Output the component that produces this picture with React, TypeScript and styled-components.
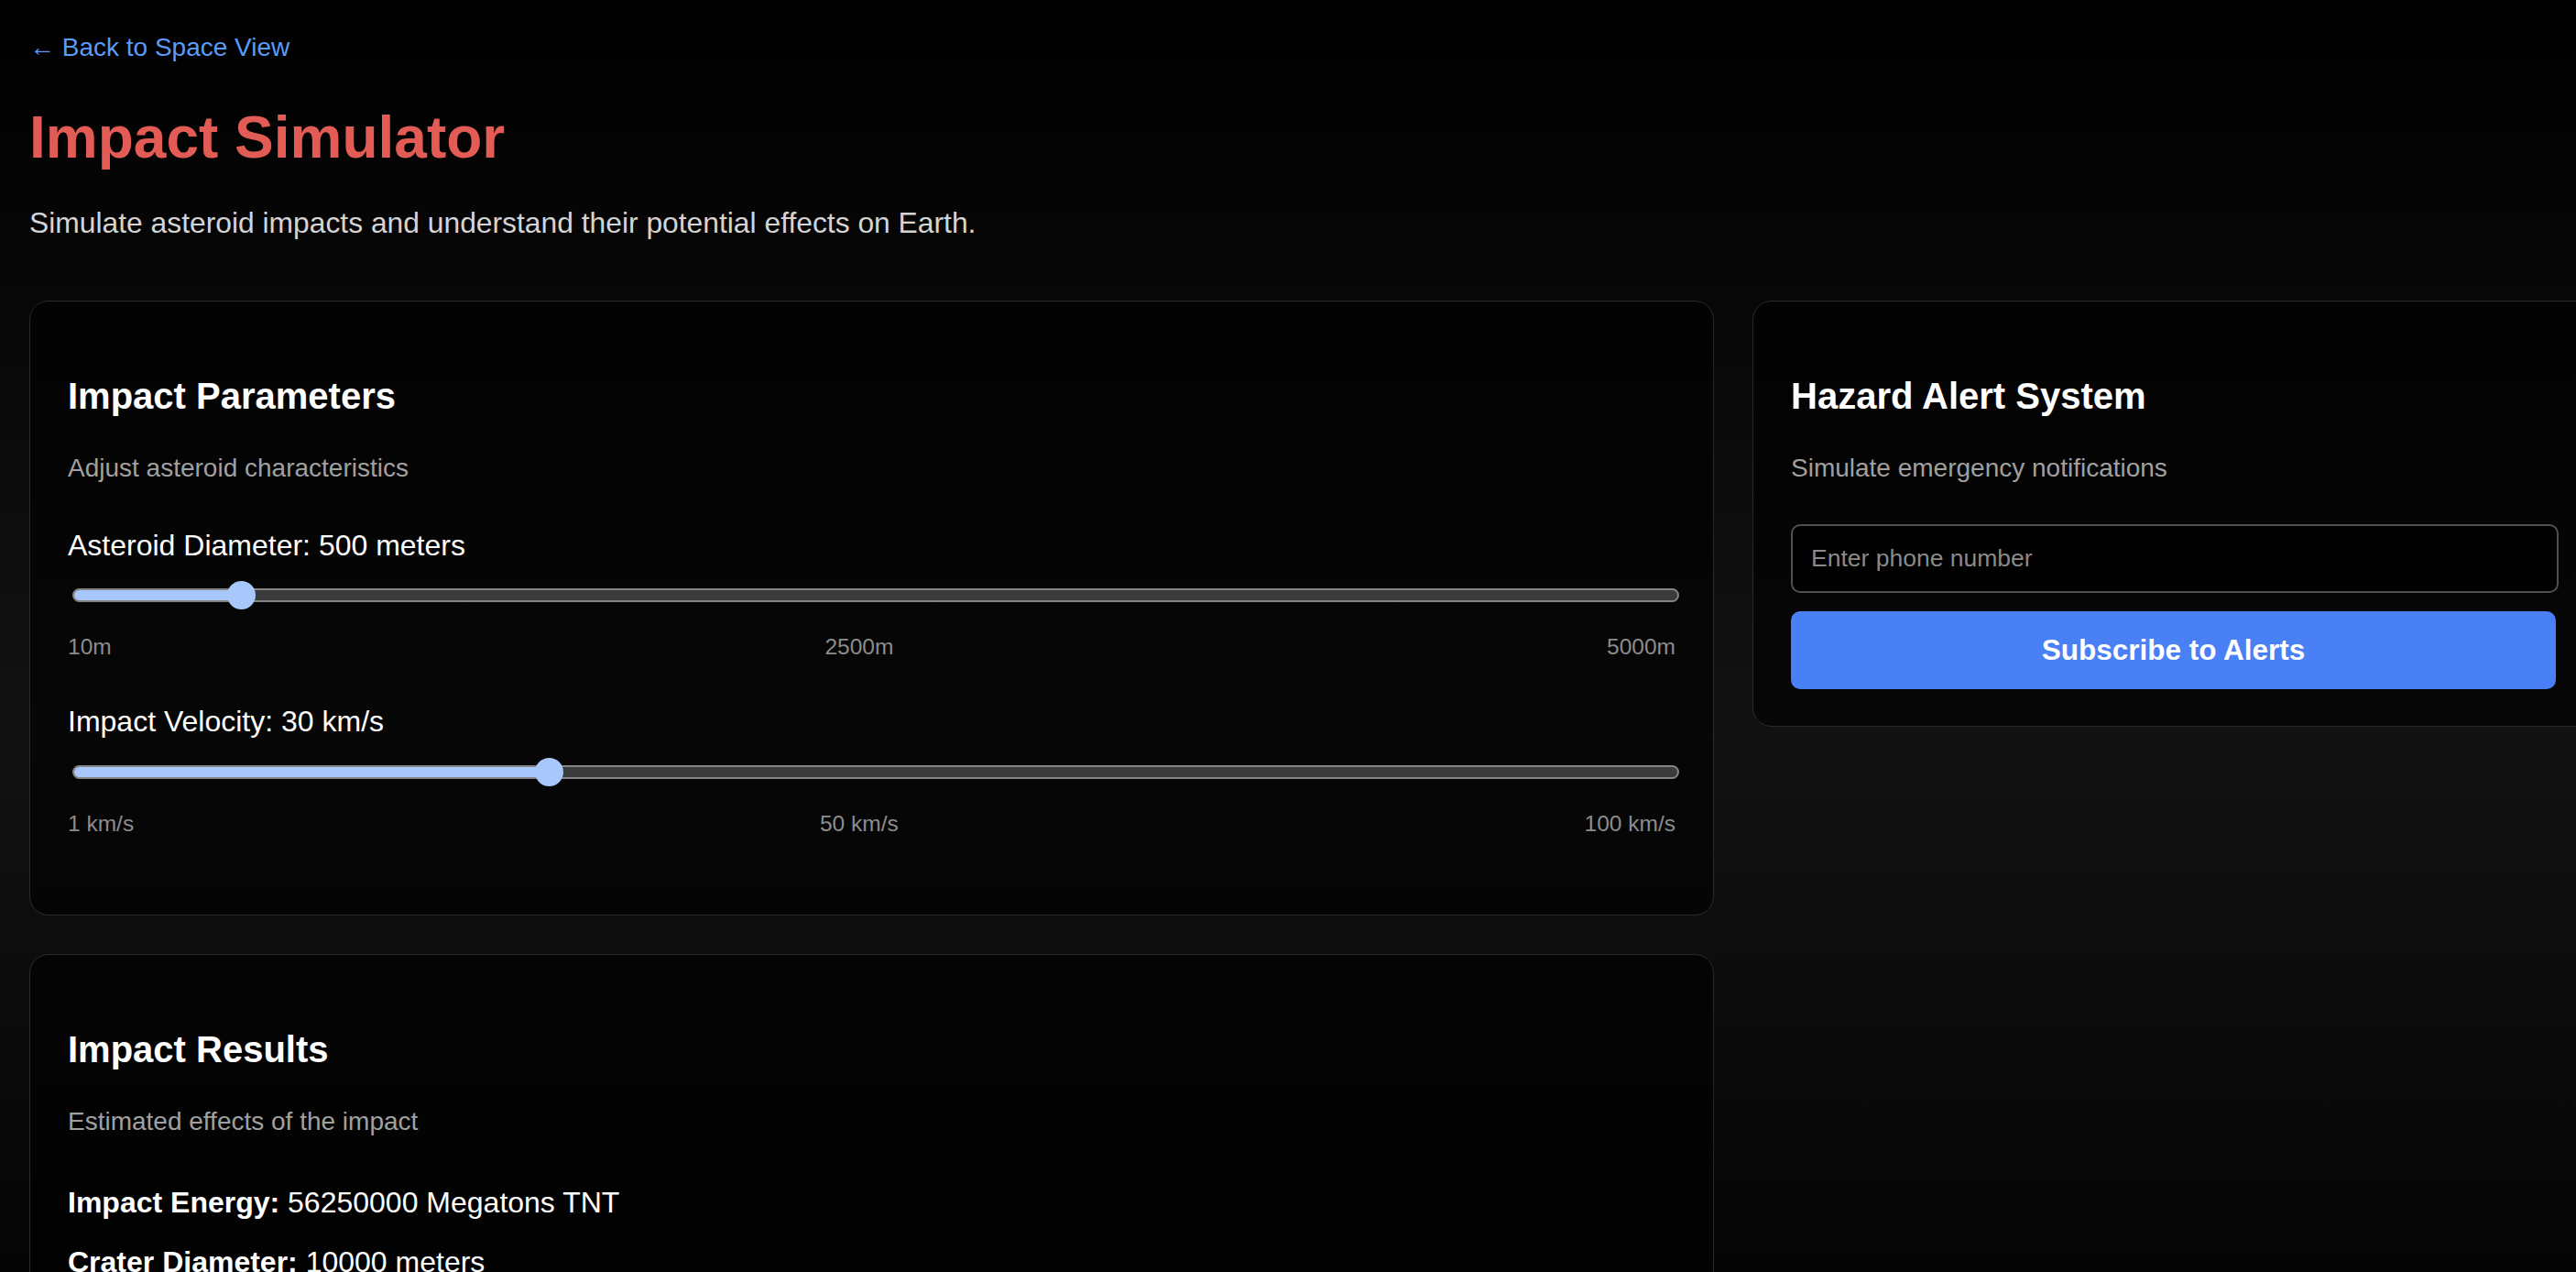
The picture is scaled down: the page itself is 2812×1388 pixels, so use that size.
import React from 'react'
import styled, { createGlobalStyle } from 'styled-components'

const GlobalStyle = createGlobalStyle`
  html, body {
    margin: 0;
    padding: 0;
    overflow: hidden;
    background: #000;
  }
  body {
    font-family: "Liberation Sans", Arial, sans-serif;
  }
  * {
    box-sizing: border-box;
  }
`

type SliderProps = {
    label: string
    value: number
    min: number
    max: number
    ticks: [string, string, string]
}

const Slider: React.FunctionComponent<SliderProps> = ({ label, value, min, max, ticks }) => {
    const f = (value - min) / (max - min)
    return (
        <ControlGroup>
            <ControlLabel>{label}</ControlLabel>
            <SliderBox>
                <Track>
                    <Fill style={{ width: `calc(${f} * (100% - 27px) + 13.5px)` }} />
                </Track>
                <Thumb style={{ left: `calc(${f} * (100% - 31px))` }} />
            </SliderBox>
            <RangeLabels>
                {ticks.map(t => <span key={t}>{t}</span>)}
            </RangeLabels>
        </ControlGroup>
    )
}

export default function App() {
    return (
        <Page>
            <GlobalStyle />
            <BackLink href="#">← Back to Space View</BackLink>
            <Title>Impact Simulator</Title>
            <Intro>Simulate asteroid impacts and understand their potential effects on Earth.</Intro>
            <Grid>
                <Column>
                    <Card>
                        <CardHeader>
                            <CardTitle>Impact Parameters</CardTitle>
                            <CardDescription>Adjust asteroid characteristics</CardDescription>
                        </CardHeader>
                        <Controls>
                            <Slider
                                label="Asteroid Diameter: 500 meters"
                                value={500}
                                min={10}
                                max={5000}
                                ticks={['10m', '2500m', '5000m']}
                            />
                            <Slider
                                label="Impact Velocity: 30 km/s"
                                value={30}
                                min={1}
                                max={100}
                                ticks={['1 km/s', '50 km/s', '100 km/s']}
                            />
                        </Controls>
                    </Card>
                    <Card>
                        <CardHeader>
                            <CardTitle>Impact Results</CardTitle>
                            <CardDescription>Estimated effects of the impact</CardDescription>
                        </CardHeader>
                        <Stats>
                            <StatRow><strong>Impact Energy:</strong> 56250000 Megatons TNT</StatRow>
                            <StatRow><strong>Crater Diameter:</strong> 10000 meters</StatRow>
                        </Stats>
                    </Card>
                </Column>
                <Column>
                    <Card>
                        <CardHeader>
                            <CardTitle>Hazard Alert System</CardTitle>
                            <CardDescription>Simulate emergency notifications</CardDescription>
                        </CardHeader>
                        <PhoneInput type="tel" placeholder="Enter phone number" />
                        <SubscribeButton>Subscribe to Alerts</SubscribeButton>
                    </Card>
                </Column>
            </Grid>
        </Page>
    )
}

const Page = styled.div`
    min-height: 1600px;
    padding: 31px 32px 32px;
    background: linear-gradient(180deg, #000 0%, #121212 50%, #000 100%);
    color: #fff;
`
const BackLink = styled.a`
    display: inline-block;
    font-size: 28px;
    line-height: 42px;
    color: #5b9bf8;
    text-decoration: none;
`
const Title = styled.h1`
    margin: 40px 0 0;
    font-size: 64px;
    line-height: 75.6px;
    font-weight: 700;
    color: #e25c55;
`
const Intro = styled.p`
    margin: 33px 0 0;
    font-size: 31.8px;
    line-height: 42px;
    color: #d4d4d4;
`
const Grid = styled.div`
    display: grid;
    grid-template-columns: 1839px 922px;
    gap: 42px;
    align-items: start;
    margin-top: 64px;
`
const Column = styled.div`
    display: flex;
    flex-direction: column;
    gap: 42px;
`
const Card = styled.section`
    border: 1px solid #2a2a2a;
    border-radius: 21px;
    background: rgba(0, 0, 0, 0.6);
    padding: 82px 41px 40px;
`
const CardHeader = styled.div`
    display: flex;
    flex-direction: column;
    gap: 37px;
    margin-bottom: 40px;
`
const CardTitle = styled.h2`
    margin: 0;
    font-size: 40px;
    line-height: 42px;
    font-weight: 700;
    color: #fff;
`
const CardDescription = styled.p`
    margin: 0;
    font-size: 28px;
    line-height: 42px;
    color: #a0a0a0;
`
const Controls = styled.div`
    display: flex;
    flex-direction: column;
    gap: 40px;
    padding-bottom: 41px;
`
const ControlGroup = styled.div`
    display: flex;
    flex-direction: column;
`
const ControlLabel = styled.label`
    font-size: 32px;
    line-height: 47px;
    color: #fff;
`
const SliderBox = styled.div`
    position: relative;
    display: flex;
    align-items: center;
    height: 31px;
    margin: 15.5px -4px 0 5px;
`
const Track = styled.div`
    width: 100%;
    height: 15px;
    border: 2px solid #858585;
    border-radius: 8px;
    background: #3b3b3b;
    overflow: hidden;
`
const Fill = styled.div`
    height: 100%;
    background: #a8c7fa;
`
const Thumb = styled.div`
    position: absolute;
    top: 0;
    width: 31px;
    height: 31px;
    border-radius: 50%;
    background: #a8c7fa;
`
const RangeLabels = styled.div`
    display: flex;
    justify-content: space-between;
    margin-top: 22px;
    font-size: 24.5px;
    line-height: 37px;
    color: #8c8c8c;
`
const PhoneInput = styled.input`
    display: block;
    width: 100%;
    height: 75px;
    padding: 0 20px;
    border: 2px solid #505050;
    border-radius: 10px;
    background: #000;
    color: #fff;
    font-family: inherit;
    font-size: 26.5px;
    outline: none;

    &::placeholder {
        color: #8a8a8a;
    }
`
const SubscribeButton = styled.button`
    display: block;
    width: calc(100% - 3px);
    height: 85px;
    margin-top: 20px;
    border: none;
    border-radius: 10px;
    background: #4a80f5;
    color: #fff;
    font-family: inherit;
    font-size: 31.5px;
    font-weight: 700;
    cursor: pointer;
`
const Stats = styled.div`
    display: flex;
    flex-direction: column;
    gap: 18px;
    padding: 4px 0 38px;
`
const StatRow = styled.p`
    margin: 0;
    font-size: 32px;
    line-height: 47px;
    color: #fff;

    strong {
        font-weight: 700;
    }
`
